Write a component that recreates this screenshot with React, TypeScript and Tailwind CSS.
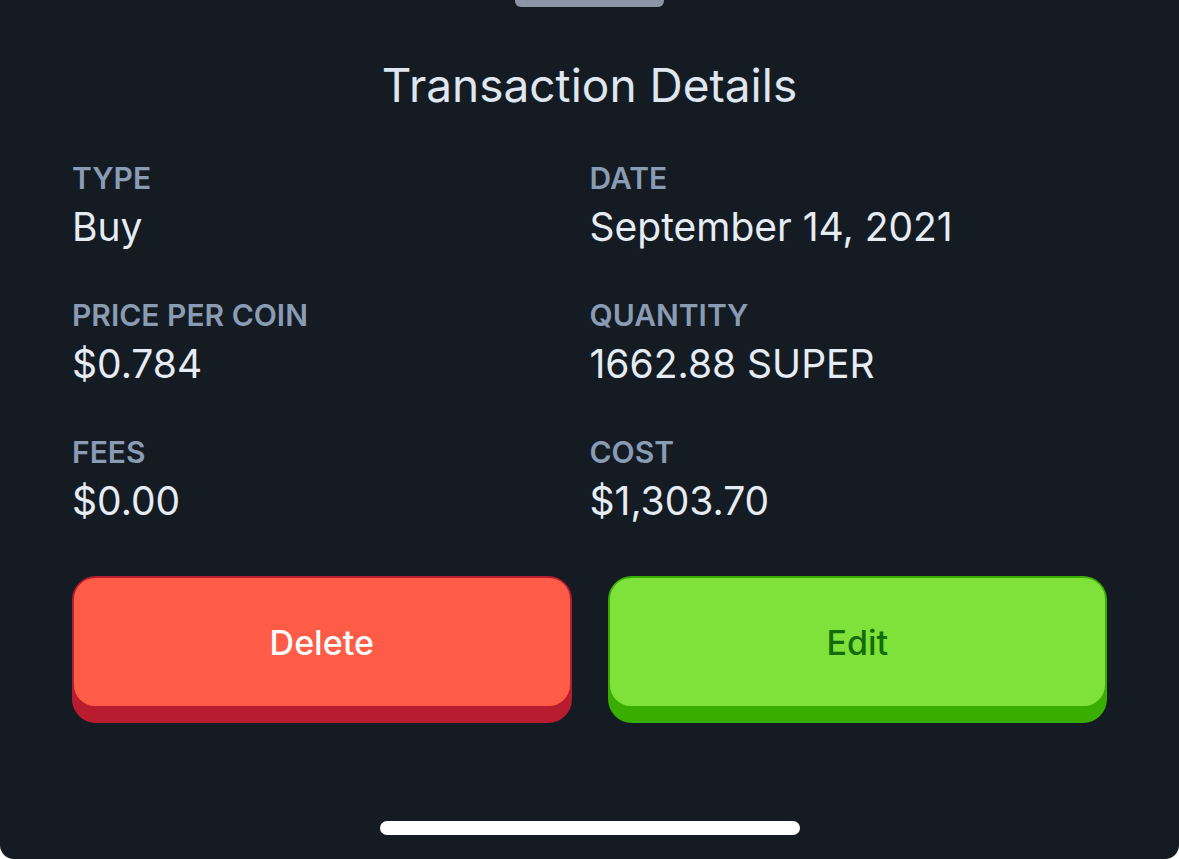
const rows = [
  { label: "TYPE", value: "Buy" },
  { label: "DATE", value: "September 14, 2021" },
  { label: "PRICE PER COIN", value: "$0.784" },
  { label: "QUANTITY", value: "1662.88 SUPER" },
  { label: "FEES", value: "$0.00" },
  { label: "COST", value: "$1,303.70" },
];

export default function App() {
  return (
    <div className="h-[859px] w-full bg-white" style={{ fontFamily: "Inter, 'Noto Sans', sans-serif" }}>
      <div className="flex h-full flex-col rounded-b-[14px] bg-[#151b23] px-[72px]">
        {/* sheet grabber */}
        <div className="mx-auto h-[7px] w-[149px] rounded-b-[6px] bg-[#8b95a5]" />

        <h1 className="mt-[54px] text-center text-[46px] font-normal leading-[48px] text-[#dfe6ef]">
          Transaction Details
        </h1>

        <div className="mt-[52px] grid grid-cols-2 gap-y-[48px]">
          {rows.map((r) => (
            <div key={r.label} className="flex flex-col">
              <span className="text-[30px] font-semibold leading-[34px] text-[#8a9bb4]">{r.label}</span>
              <span className="mt-[9px] text-[39px] font-normal leading-[46px] text-[#e6ecf3]">{r.value}</span>
            </div>
          ))}
        </div>

        {/* actions */}
        <div className="mt-[52px] grid grid-cols-2 gap-[36px]">
          <button className="rounded-[24px] bg-[#b91c2e] px-[2px] pt-[2px] pb-[17px]">
            <div className="flex h-[128px] items-center justify-center rounded-[21px] bg-[#ff5c47] text-[34px] font-medium text-white">
              Delete
            </div>
          </button>
          <button className="rounded-[24px] bg-[#3aae00] px-[2px] pt-[2px] pb-[17px]">
            <div className="flex h-[128px] items-center justify-center rounded-[21px] bg-[#7ee23a] text-[34px] font-medium text-[#146b0a]">
              Edit
            </div>
          </button>
        </div>

        <div className="mt-auto mb-[24px] mx-auto h-[14px] w-[420px] rounded-full bg-white" />
      </div>
    </div>
  );
}
